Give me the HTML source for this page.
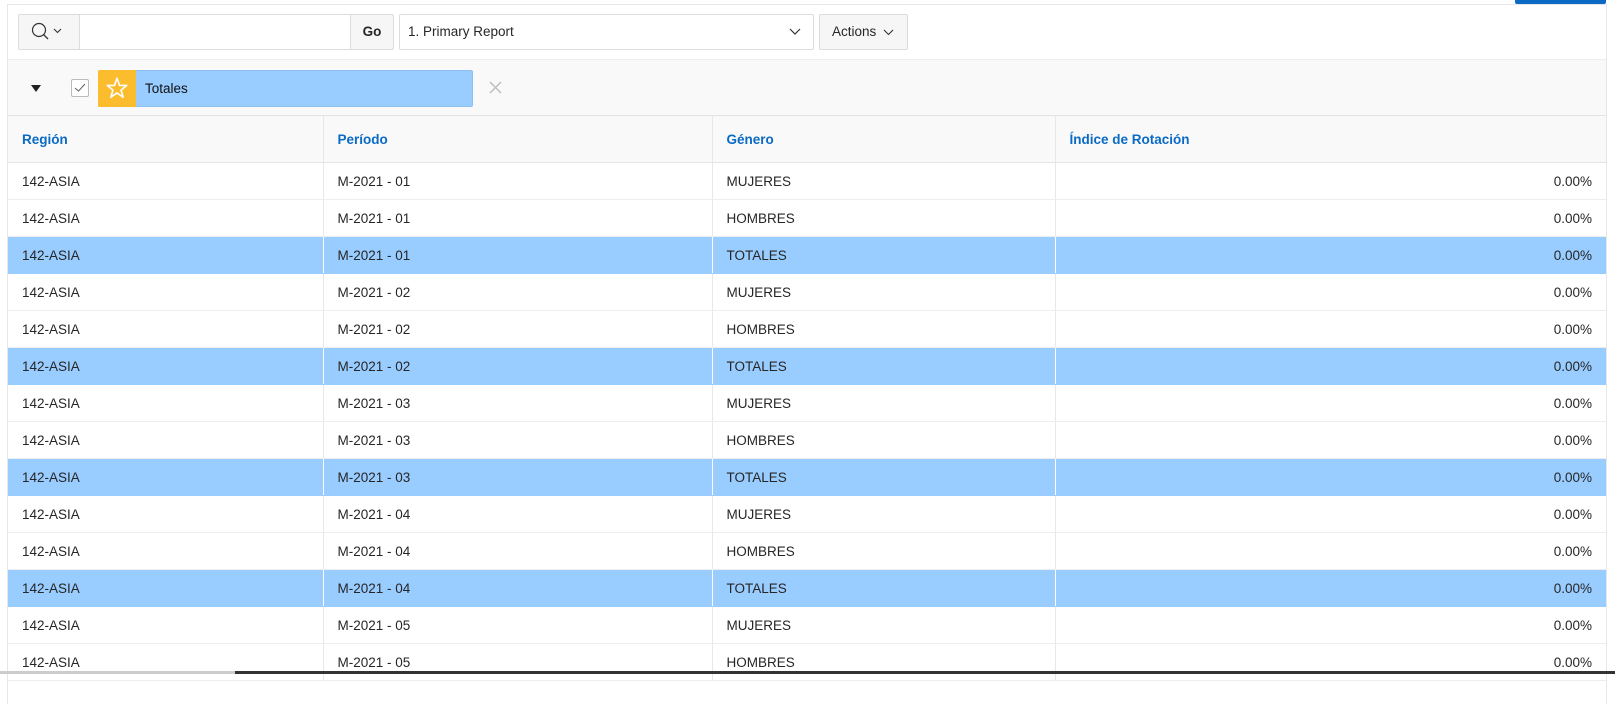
<!DOCTYPE html>
<html><head><meta charset="utf-8"><style>
*{box-sizing:border-box}
body{margin:0;width:1615px;height:674px;overflow:hidden;background:#fff;font-family:"Liberation Sans",sans-serif;font-size:13.5px;color:#262626;position:relative}
.wrap{position:absolute;left:7px;top:4px;width:1600px;height:700px;border:1px solid #e6e6e6;border-bottom:none}
.btn{position:absolute;border:1px solid #dcdcdc;border-radius:2px;background:#f6f6f6;height:36px;top:9px}
.tb{position:absolute;left:0;top:0;width:100%;height:54px;background:#fff}
.fr{position:absolute;left:0;top:54px;width:100%;height:56px;background:#f9f9f9;border-top:1px solid #eee}
table{position:absolute;left:0;top:110px;width:1598px;border-collapse:collapse;table-layout:fixed}
th,td{border-left:1px solid #e8e8e8;padding:0 14px;text-align:left;white-space:nowrap}
th:first-child,td:first-child{border-left:none}
th{height:47px;background:#f9f9f9;color:#0a6ac4;font-weight:bold;border-top:1px solid #e4e4e4;border-bottom:1px solid #e4e4e4}
td{height:37px;border-bottom:1px solid #eee}
td.n{text-align:right;padding-right:14px}
tr.t td{background:#99ccff;border-left-color:#fff;border-bottom-color:#99ccff}
</style></head><body>
<div style="position:absolute;left:1515px;top:0;width:91px;height:4px;background:#0a6ac4;border-radius:0 0 2px 2px"></div>
<div class="wrap">
<div class="tb">
 <div class="btn" style="left:10px;width:62px;border-radius:2px 0 0 2px">
  <svg width="40" height="34" viewBox="0 0 40 34" style="position:absolute;left:8px;top:0"><circle cx="12" cy="15" r="6.5" fill="none" stroke="#333" stroke-width="1.2"/><line x1="16.7" y1="19.7" x2="21" y2="24" stroke="#333" stroke-width="1.3"/><polyline points="27,14 30.5,17.5 34,14" fill="none" stroke="#333" stroke-width="1.1"/></svg>
 </div>
 <div style="position:absolute;left:72px;top:9px;width:270px;height:36px;border:1px solid #dcdcdc;border-left:none;border-right:none;background:#fff"></div>
 <div class="btn" style="left:342px;width:44px;border-radius:0 2px 2px 0;font-weight:bold;line-height:34px;text-align:center">Go</div>
 <div class="btn" style="left:391px;width:415px;background:#fff;line-height:34px;padding-left:8px">1. Primary Report
  <svg width="12" height="8" style="position:absolute;right:12px;top:13px"><polyline points="1,1 6,6 11,1" fill="none" stroke="#333" stroke-width="1.2"/></svg></div>
 <div class="btn" style="left:811px;width:89px;line-height:34px;padding-left:12px">Actions
  <svg width="11" height="7" style="position:absolute;right:13px;top:14px"><polyline points="1,1 5.5,5.5 10,1" fill="none" stroke="#333" stroke-width="1.1"/></svg></div>
</div>
<div class="fr">
 <svg width="10" height="8" style="position:absolute;left:23px;top:25px"><polygon points="0,0 10,0 5,7" fill="#222"/></svg>
 <div style="position:absolute;left:63px;top:19px;width:18px;height:18px;border:1px solid #bbb;border-radius:2px;background:#fff">
  <svg width="16" height="16" style="position:absolute;left:0;top:0"><polyline points="3,8 6.5,11 13,4" fill="none" stroke="#666" stroke-width="1"/></svg></div>
 <div style="position:absolute;left:90px;top:10px;width:375px;height:37px;background:#99ccff;border-radius:2px;border:1px solid #8ebfee">
  <div style="position:absolute;left:-1px;top:-1px;width:38px;height:37px;background:#fbbd2d;border-radius:2px 0 0 2px">
   <svg width="38" height="37" viewBox="0 0 37 36"><polygon points="18.5,8 21,15 28,15 22.5,19.5 24.5,26.5 18.5,22.3 12.5,26.5 14.5,19.5 9,15 16,15" fill="none" stroke="#fff" stroke-width="1.6" stroke-linejoin="round"/></svg></div>
  <span style="position:absolute;left:46px;top:10px;color:#111">Totales</span>
 </div>
 <svg width="14" height="14" style="position:absolute;left:481px;top:21px"><path d="M1 1L12 12M12 1L1 12" stroke="#bbb" stroke-width="1.3"/></svg>
</div>
<table>
<colgroup><col style="width:315px"><col style="width:389px"><col style="width:343px"><col></colgroup>
<tr><th>Región</th><th>Período</th><th>Género</th><th>Índice de Rotación</th></tr>
<tr><td>142-ASIA</td><td>M-2021 - 01</td><td>MUJERES</td><td class="n">0.00%</td></tr>
<tr><td>142-ASIA</td><td>M-2021 - 01</td><td>HOMBRES</td><td class="n">0.00%</td></tr>
<tr class="t"><td>142-ASIA</td><td>M-2021 - 01</td><td>TOTALES</td><td class="n">0.00%</td></tr>
<tr><td>142-ASIA</td><td>M-2021 - 02</td><td>MUJERES</td><td class="n">0.00%</td></tr>
<tr><td>142-ASIA</td><td>M-2021 - 02</td><td>HOMBRES</td><td class="n">0.00%</td></tr>
<tr class="t"><td>142-ASIA</td><td>M-2021 - 02</td><td>TOTALES</td><td class="n">0.00%</td></tr>
<tr><td>142-ASIA</td><td>M-2021 - 03</td><td>MUJERES</td><td class="n">0.00%</td></tr>
<tr><td>142-ASIA</td><td>M-2021 - 03</td><td>HOMBRES</td><td class="n">0.00%</td></tr>
<tr class="t"><td>142-ASIA</td><td>M-2021 - 03</td><td>TOTALES</td><td class="n">0.00%</td></tr>
<tr><td>142-ASIA</td><td>M-2021 - 04</td><td>MUJERES</td><td class="n">0.00%</td></tr>
<tr><td>142-ASIA</td><td>M-2021 - 04</td><td>HOMBRES</td><td class="n">0.00%</td></tr>
<tr class="t"><td>142-ASIA</td><td>M-2021 - 04</td><td>TOTALES</td><td class="n">0.00%</td></tr>
<tr><td>142-ASIA</td><td>M-2021 - 05</td><td>MUJERES</td><td class="n">0.00%</td></tr>
<tr><td>142-ASIA</td><td>M-2021 - 05</td><td>HOMBRES</td><td class="n">0.00%</td></tr>
</table>
</div>
<div style="position:absolute;left:0;top:671px;width:235px;height:3px;background:#ccc"></div>
<div style="position:absolute;left:235px;top:671px;width:1380px;height:3px;background:#333"></div>
</body></html>
